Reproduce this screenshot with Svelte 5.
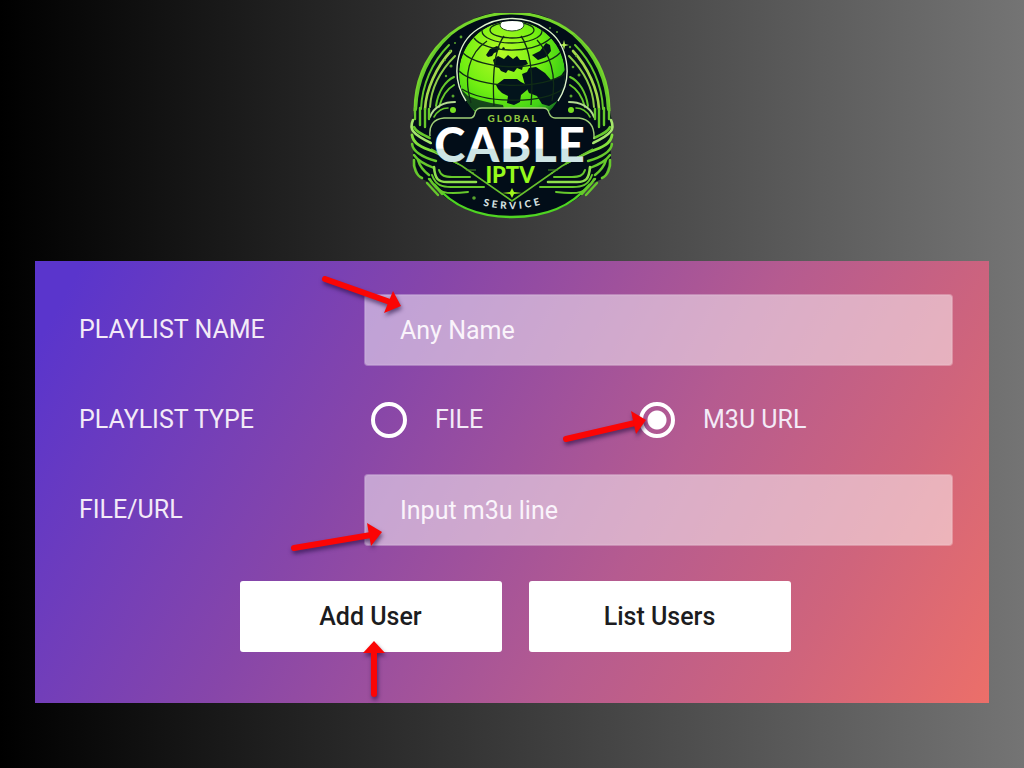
<script lang="ts">
  let playlistName = $state('');
  let playlistType = $state('url');
  let source = $state('');

  // small sparkles scattered between the rings of the badge
  const dots = [
    [55, 38, 1], [61, 32, 1.4], [50, 46, 1], [45, 55, 1], [51, 61, 1.6], [46, 71, 1.2],
    [150, 23, 1], [157, 27, 1], [170, 42, 1.2], [176, 51, 1], [173, 62, 1.3], [179, 70, 1.5],
    [53, 91, 1.5], [171, 91, 1.5], [73, 168, 1], [152, 168, 1], [143, 170, 1.2], [74, 193, 1.8]
  ];
</script>

{#snippet arrow(kind: string, shaft: string, head: string)}
  <svg class="arrow {kind}" width="110" height="70" viewBox="0 0 110 70" aria-hidden="true">
    <path d={shaft} stroke="#fb0505" stroke-width="6" stroke-linecap="round" />
    <path d={head} fill="#fb0505" />
  </svg>
{/snippet}

{#snippet halfBadge()}
  <path d="M16 104C17 76 29 50 50 30" stroke-width="2.4" />
  <path d="M21 104C22 80 32 57 49 40" stroke-width="2" />
  <path d="M25 104C26 85 36 62 51 46" stroke-width="2.6" stroke="#a4d94c" />
  <path d="M30 102C31 85 39 67 55 51" stroke-width="2" stroke="#8fcc4a" />
  <path d="M36 101C38 87 45 76 54 72" stroke-width="2" />
  <path d="M39 102C42 91 47 84 54 80" stroke-width="2" />
  <path d="M30 112C34 101 45 97 55 97" stroke="#b4dc90" stroke-width="2" />
  <path d="M34 112C38 105 42 103 48 103" />
  <path d="M15 103V114M20 103V120M25 104V122M29 104V114" stroke-width="2.4" />
  <path d="M13 115C9 124 12 129 31 138" stroke-width="2.6" stroke="#a6e66c" />
  <path d="M14 122C16 127 23 130 30 133" stroke-width="2.6" />
  <path d="M12 130C13 138 20 142 35 147L58 158" stroke-width="2.8" stroke="#83df3c" />
  <path d="M12 139C13 147 22 152 36 156" stroke-width="2.4" />
  <path d="M14 150C18 156 26 160 34 163" stroke-width="2.4" />
  <path d="M14 155C13 163 17 171 22 173M18 155C20 162 25 167 29 170" stroke-width="2.6" />
  <path d="M34 162C35 174 38 177 47 177H76" stroke-width="2.6" stroke="#8fe04c" />
  <path d="M39 165C41 171 45 172 52 172H70" stroke-width="2" />
  <path d="M32 170C36 181 43 182 51 182H84" stroke-width="2" />
  <path d="M30 174C37 188 45 190 68 187" stroke-width="2" />
  <path d="M29 174L42 189M27 178L38 190" stroke-width="2.4" />
{/snippet}

<main>
  <svg class="logo" width="224" height="220" viewBox="0 0 224 220" role="img" aria-label="Global Cable IPTV Service">
    <defs>
      <radialGradient id="sea" cx=".4" cy=".3" r=".75">
        <stop offset="0" stop-color="#b6fa26" />
        <stop offset=".5" stop-color="#72ef12" />
        <stop offset=".8" stop-color="#3fd016" />
        <stop offset="1" stop-color="#0d5521" />
      </radialGradient>
      <linearGradient id="chrome" gradientUnits="userSpaceOnUse" x1="0" y1="122" x2="0" y2="157">
        <stop offset=".6" stop-color="#ffffff" />
        <stop offset=".64" stop-color="#cee5e5" />
      </linearGradient>
      <clipPath id="badge"><rect x="8" y="8" width="208" height="206" /></clipPath>
      <clipPath id="globe"><circle cx="112" cy="69" r="53" /></clipPath>
    </defs>
    <g clip-path="url(#badge)">
      <path
        d="M112 6C58 6 14 50 14 107L11 120L14 137L13 153L20 173L31 178C48 201 78 212 112 212C146 212 176 201 193 178L204 173L211 153L210 137L213 120L210 107C210 50 166 6 112 6Z"
        fill="#020d18"
      />
      <path d="M15 106C15 48 59 8 112 8S209 48 209 106" fill="none" stroke="#76d62b" stroke-width="3" />
      <path d="M34 179C53 202 78 212 112 212S171 202 190 179" fill="none" stroke="#4fd522" stroke-width="2.4" />
      <g fill="none" stroke="#67c92c" stroke-width="1.6" stroke-linecap="round">
        {@render halfBadge()}
        <g transform="matrix(-1 0 0 1 224 0)">{@render halfBadge()}</g>
      </g>
      {#each dots as [x, y, r]}
        <circle cx={x} cy={y} {r} fill="#58a52d" />
      {/each}
      <path d="M164 35l1 4 4 1-4 1-1 4-1-4-4-1 4-1z" fill="#b5f052" />

      <circle cx="112" cy="69" r="55" fill="#020d18" />
      <g clip-path="url(#globe)">
        <circle cx="112" cy="69" r="53" fill="url(#sea)" />
        <g fill="#03141c">
          <path d="M86 50L90 44 97 41 100 43 97 47 94 48 92 51 88 52Z" />
          <path d="M93 55L98 51 104 54 108 50 113 54 117 51 120 55 126 55 128 59 123 61 122 65 117 63 114 67 108 65 106 68 101 66 99 63 95 62Z" />
          <path d="M96 80L104 74 117 74 121 77 127 80 127 85 121 90 120 97 114 100 107 98 108 91 102 88 98 84Z" />
          <path d="M122 69L127 67 129 63 136 62 145 68 151 75 160 72 167 62 167 90 149 101 142 99 137 91 129 88 125 80Z" />
          <path d="M132 50L140 46 146 38 150 40 151 46 146 52 138 55Z" />
          <path d="M102 43l2-1 1 2-2 1z" />
          <path d="M59 82L68 91 79 95 91 98 103 100 104 104 77 107 59 95Z" opacity=".75" />
        </g>
        <g fill="none" stroke="#102c16" stroke-width="1.3">
          <ellipse cx="112" cy="25" rx="22" ry="8" />
          <ellipse cx="112" cy="26" rx="30" ry="12" />
          <path d="M74 33C84 47 131 51 151 33M63 48C80 65 142 68 161 47M59 66C77 84 145 86 167 67M62 84C84 98 140 100 163 84" />
          <path d="M104 31C95 43 92 67 94 101M87 36C69 48 63 70 71 98M121 31C129 42 134 67 131 100M137 35C150 49 157 70 152 96" />
        </g>
        <ellipse cx="112" cy="20" rx="12" ry="6" fill="#fff" stroke="#284d24" stroke-width="1" />
      </g>
      <path d="M66 96C50 72 56 38 78 24C99 10 126 10 146 24C168 38 174 72 158 96" fill="none" stroke="#def4cc" stroke-width="1.4" />
      <circle cx="53" cy="105" r="3" fill="#78e020" />
      <circle cx="171" cy="105" r="3" fill="#78e020" />

      <path
        d="M31 135C29 124 33 114 44 113H70Q74 113 75 108Q76 103 82 103H143Q148 103 149 108Q151 113 155 113H179Q195 115 193 135L190 145 155 163 112 197 68 163 35 147Z"
        fill="#020d18"
      />
      <path
        d="M30 131C29 121 33 114 44 113H70Q74 113 75 108Q76 103 82 103H143Q148 103 149 108Q151 113 155 113H179Q195 115 194 134"
        fill="none"
        stroke="#a0cf77"
        stroke-width="1.4"
      />
      <path d="M31 144L62 161L112 196L162 161L193 144" fill="none" stroke="#67c02d" stroke-width="1.6" />
      <path d="M66 165h10M148 165h10" stroke="#4b9327" />
      <path d="M112 183L114 187 122 188 114 189 112 193 110 189 102 188 110 187Z" fill="#a1f51b" />

      <text class="global" x="113" y="117">GLOBAL</text>
      <text class="cable" x="110" y="157" fill="url(#chrome)">CABLE</text>
      <text class="iptv" x="110" y="178">IPTV</text>
      <path id="service-arc" d="M70 196Q113 213 156 194" fill="none" />
      <text class="service"><textPath href="#service-arc" startOffset="50%">SERVICE</textPath></text>
    </g>
  </svg>

  <form onsubmit={(e) => e.preventDefault()}>
    <div class="row">
      <label for="playlist-name">PLAYLIST NAME</label>
      <div class="field">
        <input id="playlist-name" type="text" placeholder="Any Name" bind:value={playlistName} />
        {@render arrow('to-name', 'M5 5L70 28', 'M81 32L73 17L64 39Z')}
      </div>
    </div>

    <div class="row" role="radiogroup" aria-labelledby="type-label">
      <span id="type-label">PLAYLIST TYPE</span>
      <div class="options">
        <label class="option">
          <input type="radio" name="type" value="file" bind:group={playlistType} />
          FILE
        </label>
        <label class="option">
          <input type="radio" name="type" value="url" bind:group={playlistType} />
          M3U URL
          {@render arrow('to-type', 'M5 31L74 15', 'M85 12L70 3L75 26Z')}
        </label>
      </div>
    </div>

    <div class="row">
      <label for="source">FILE/URL</label>
      <div class="field">
        <input id="source" type="text" placeholder="Input m3u line" bind:value={source} />
        {@render arrow('to-source', 'M5 28L82 15', 'M93 12L78 3L82 26Z')}
      </div>
    </div>

    <div class="actions">
      <button type="submit">
        Add User
        {@render arrow('to-add', 'M15 55V12', 'M15 2L4 14H26Z')}
      </button>
      <button type="button">List Users</button>
    </div>
  </form>
</main>

<style>
  :global(body) {
    margin: 0;
  }

  main {
    box-sizing: border-box;
    min-height: 100vh;
    display: flex;
    flex-direction: column;
    gap: 36px;
    padding: 5px 35px 66px;
    background: linear-gradient(90deg, #000, #747474);
    font-family: Roboto, sans-serif;
  }

  .logo {
    align-self: center;
    flex-shrink: 0;
  }

  .logo text {
    font-family: Lato, sans-serif;
    font-weight: 900;
    text-anchor: middle;
  }

  .logo .global {
    font-size: 10px;
    letter-spacing: 2px;
    fill: #8fc53f;
  }

  .logo .cable {
    font-size: 47px;
    letter-spacing: 1px;
  }

  .logo .iptv {
    font-size: 22px;
    fill: #96fa1c;
  }

  .logo .service {
    font-size: 10px;
    letter-spacing: 3px;
    fill: #d5e0e0;
  }

  form {
    display: flex;
    flex-direction: column;
    gap: 35px;
    padding: 33px 36px 51px 44px;
    background: linear-gradient(119deg, #5a35cc 4%, #8746a9 35%, #b55b90 63%, #cf647c 82%, #ec6f69 100%);
    color: #f3eaf7;
    font-size: 25px;
    line-height: 38px;
  }

  .row {
    display: grid;
    grid-template-columns: 285px 1fr;
    align-items: center;
  }

  .field {
    position: relative;
  }

  input[type='text'] {
    display: block;
    box-sizing: border-box;
    width: 100%;
    height: 72px;
    padding: 0 35px;
    border: 1px solid rgba(255, 255, 255, 0.3);
    border-radius: 4px;
    background: rgba(255, 255, 255, 0.5);
    background-clip: padding-box;
    box-shadow: inset 0 0 2px rgba(255, 255, 255, 0.3);
    color: #fff;
    font: inherit;
  }

  input::placeholder {
    color: #faf4fb;
    opacity: 1;
  }

  .options {
    display: grid;
    grid-template-columns: 268px auto;
    justify-content: start;
    padding-left: 7px;
  }

  .option {
    position: relative;
    display: flex;
    align-items: center;
    gap: 28px;
  }

  input[type='radio'] {
    appearance: none;
    box-sizing: border-box;
    width: 36px;
    height: 36px;
    margin: 0;
    border: 4px solid #fff;
    border-radius: 50%;
  }

  input[type='radio']:checked {
    background: radial-gradient(circle, #fff 9px, transparent 10px);
  }

  .actions {
    display: flex;
    justify-content: center;
    gap: 27px;
    padding-right: 2px;
  }

  button {
    position: relative;
    width: 262px;
    height: 71px;
    padding: 0;
    border: none;
    border-radius: 3px;
    background: #fff;
    color: #1c1c20;
    font: 500 25px/38px Roboto, sans-serif;
    cursor: pointer;
  }

  .arrow {
    position: absolute;
    overflow: visible;
    fill: none;
    filter: drop-shadow(1px 3px 2px rgba(30, 10, 60, 0.6));
    pointer-events: none;
  }

  .to-name {
    left: -44px;
    top: -20px;
  }

  .to-type {
    left: -78px;
    top: 7px;
  }

  .to-source {
    left: -75px;
    top: 46px;
  }

  .to-add {
    left: 119px;
    top: 58px;
  }
</style>
